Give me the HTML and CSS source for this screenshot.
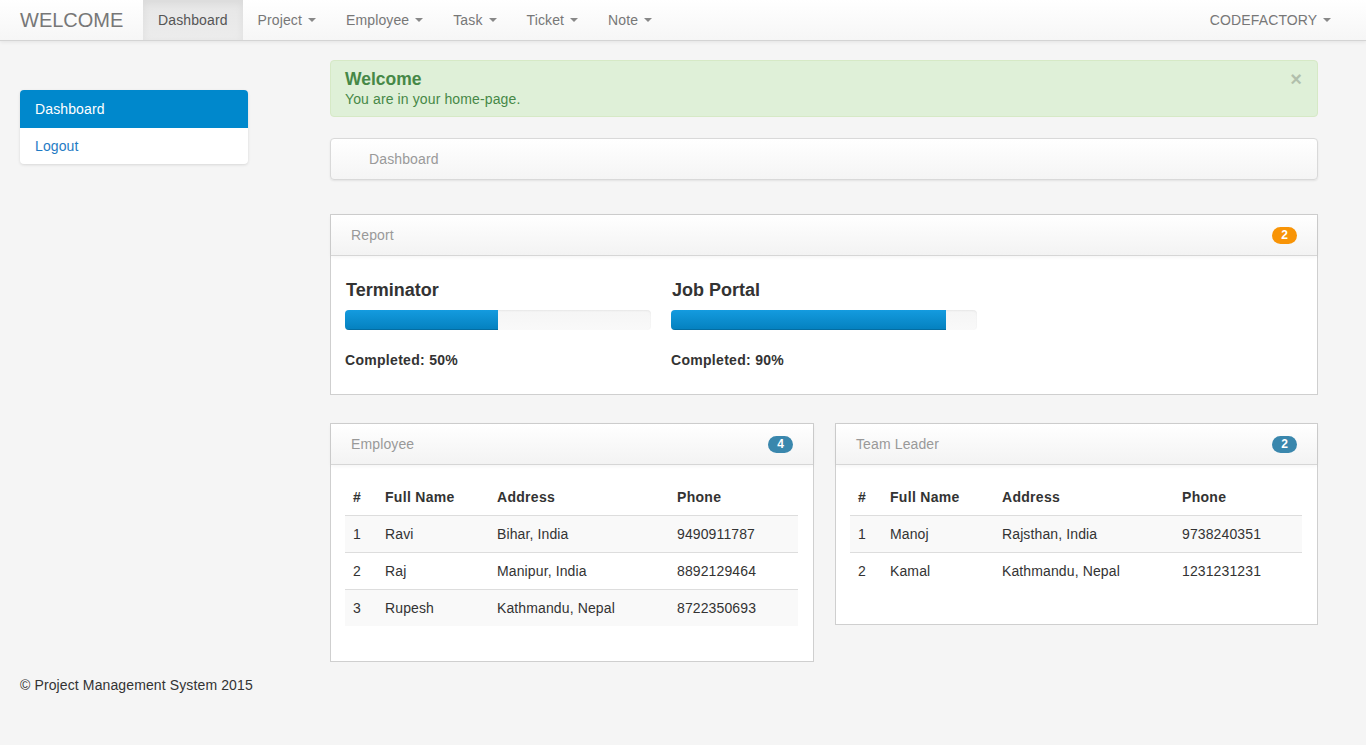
FILE: index.html
```html
<!DOCTYPE html>
<html>
<head>
<meta charset="utf-8">
<title>Dashboard</title>
<link rel="stylesheet" href="styles.css">
</head>
<body>
<nav class="navbar">
  <a class="brand">WELCOME</a>
  <ul class="nav">
    <li class="active"><a>Dashboard</a></li>
    <li><a>Project <b class="caret"></b></a></li>
    <li><a>Employee <b class="caret"></b></a></li>
    <li><a>Task <b class="caret"></b></a></li>
    <li><a>Ticket <b class="caret"></b></a></li>
    <li><a>Note <b class="caret"></b></a></li>
  </ul>
  <ul class="nav nav-right">
    <li><a>CODEFACTORY <b class="caret"></b></a></li>
  </ul>
</nav>

<div class="page">
  <aside class="sidebar">
    <div class="list-group">
      <a class="list-item active">Dashboard</a>
      <a class="list-item">Logout</a>
    </div>
  </aside>

  <main class="main">
    <div class="alert">
      <div class="alert-text">
        <h4>Welcome</h4>
        <div>You are in your home-page.</div>
      </div>
      <span class="close">&times;</span>
    </div>

    <div class="breadcrumb">Dashboard</div>

    <section class="panel report">
      <div class="panel-heading"><span>Report</span><span class="badge badge-warning">2</span></div>
      <div class="panel-body report-body">
        <div class="projects">
          <div class="project">
            <h4>Terminator</h4>
            <div class="progress"><div class="bar" style="width:50%"></div></div>
            <p>Completed: 50%</p>
          </div>
          <div class="project">
            <h4>Job Portal</h4>
            <div class="progress"><div class="bar" style="width:90%"></div></div>
            <p>Completed: 90%</p>
          </div>
        </div>
      </div>
    </section>

    <div class="panel-row">
      <section class="panel">
        <div class="panel-heading"><span>Employee</span><span class="badge badge-info">4</span></div>
        <div class="panel-body">
          <table class="table">
            <colgroup><col class="c1"><col class="c2"><col class="c3"><col class="c4"></colgroup>
            <thead><tr><th>#</th><th>Full Name</th><th>Address</th><th>Phone</th></tr></thead>
            <tbody>
              <tr><td>1</td><td>Ravi</td><td>Bihar, India</td><td>9490911787</td></tr>
              <tr><td>2</td><td>Raj</td><td>Manipur, India</td><td>8892129464</td></tr>
              <tr><td>3</td><td>Rupesh</td><td>Kathmandu, Nepal</td><td>8722350693</td></tr>
            </tbody>
          </table>
        </div>
      </section>
      <section class="panel">
        <div class="panel-heading"><span>Team Leader</span><span class="badge badge-info">2</span></div>
        <div class="panel-body">
          <table class="table">
            <colgroup><col class="c1"><col class="c2"><col class="c3"><col class="c4"></colgroup>
            <thead><tr><th>#</th><th>Full Name</th><th>Address</th><th>Phone</th></tr></thead>
            <tbody>
              <tr><td>1</td><td>Manoj</td><td>Rajsthan, India</td><td>9738240351</td></tr>
              <tr><td>2</td><td>Kamal</td><td>Kathmandu, Nepal</td><td>1231231231</td></tr>
            </tbody>
          </table>
        </div>
      </section>
    </div>
  </main>
</div>

<footer class="footer">&copy; Project Management System 2015</footer>
</body>
</html>
```

FILE: styles.css
```css
* { box-sizing: border-box; }
html, body { margin: 0; padding: 0; }
body {
  background: #f5f5f5;
  font-family: "Liberation Sans", Arial, Helvetica, sans-serif;
  font-size: 14px;
  line-height: 20px;
  color: #333;
  letter-spacing: 0.12px;
}
a { cursor: pointer; }

/* navbar */
.navbar {
  height: 41px;
  display: flex;
  align-items: stretch;
  padding: 0 20px;
  background: linear-gradient(to bottom, #ffffff 0%, #f6f6f6 100%);
  border-bottom: 1px solid #d4d4d4;
  box-shadow: 0 1px 4px rgba(0,0,0,0.08);
}
.brand {
  font-size: 20px;
  line-height: 40px;
  color: #777;
  width: 123px;
  letter-spacing: 0;
}
.nav {
  list-style: none;
  margin: 0;
  padding: 0;
  display: flex;
}
.nav li a {
  display: block;
  padding: 10px 15px;
  line-height: 20px;
  color: #777;
}
.nav li.active a {
  color: #555;
  background: linear-gradient(to bottom, #e6e6e6 0%, #ececec 100%);
  box-shadow: inset 0 3px 8px rgba(0,0,0,0.06);
}
.nav-right { margin-left: auto; }
.caret {
  display: inline-block;
  width: 0; height: 0;
  margin-left: 2px;
  vertical-align: middle;
  border-top: 4px solid #888;
  border-left: 4px solid transparent;
  border-right: 4px solid transparent;
  position: relative;
  top: -1px;
}

/* layout */
.page {
  display: flex;
  align-items: flex-start;
  padding: 19px 48px 0 20px;
}
.sidebar {
  width: 228px;
  margin-top: 30px;
  flex: none;
}
.main {
  width: 988px;
  margin-left: 82px;
  flex: none;
}

/* sidebar list */
.list-group {
  background: #fff;
  border-radius: 4px;
  box-shadow: 0 1px 3px rgba(0,0,0,0.12);
  overflow: hidden;
}
.list-item {
  display: block;
  padding: 9px 15px 9px 15px;
  color: #1f7bc4;
}
.list-item.active {
  background: #0088cc;
  color: #fff;
  padding: 9px 15px 9px 15px;
  height: 38px;
}
.list-item:not(.active) { height: 36px; padding-top: 8px; }

/* alert */
.alert {
  display: flex;
  justify-content: space-between;
  align-items: flex-start;
  background: #dff0d8;
  border: 1px solid #d6e9c6;
  border-radius: 4px;
  padding: 8px 14px 8px 14px;
  color: #468847;
  height: 57px;
}
.alert h4 {
  margin: 0;
  font-size: 17.5px;
  font-weight: bold;
  line-height: 20px;
  letter-spacing: 0;
}
.close {
  font-size: 20px;
  font-weight: bold;
  line-height: 20px;
  color: #000;
  opacity: 0.2;
  margin-top: 0;
  margin-right: 1px;
}

/* breadcrumb */
.breadcrumb {
  margin-top: 21px;
  height: 42px;
  padding: 10px 38px;
  background: linear-gradient(to bottom, #ffffff 0%, #f5f5f5 100%);
  border: 1px solid #d9d9d9;
  border-radius: 4px;
  box-shadow: 0 1px 2px rgba(0,0,0,0.08);
  color: #999;
}

/* panels */
.panel {
  background: #fff;
  border: 1px solid #cfcfcf;
}
.report { margin-top: 34px; }
.panel-heading {
  height: 41px;
  display: flex;
  justify-content: space-between;
  align-items: center;
  padding: 0 20px;
  color: #999;
  background: linear-gradient(to bottom, #ffffff 0%, #f3f3f3 100%);
  border-bottom: 1px solid #d6d6d6;
  box-shadow: 0 1px 4px rgba(0,0,0,0.05);
}
.badge {
  display: inline-block;
  min-width: 25px;
  height: 17px;
  padding: 0 8px;
  border-radius: 9px;
  color: #fff;
  font-size: 12px;
  font-weight: bold;
  line-height: 17px;
  text-align: center;
  letter-spacing: 0;
}
.badge-warning { background: #f89406; }
.badge-info { background: #3a87ad; }
.panel-body { padding: 15px 15px 15px 14px; }
.report-body { padding-bottom: 14px; }

/* report */
.projects {
  display: grid;
  grid-template-columns: 306px 306px;
  column-gap: 20px;
}
.project h4 {
  margin: 9px 0 10px 1px;
  font-size: 18px;
  line-height: 20px;
  font-weight: bold;
  color: #333;
  letter-spacing: 0;
}
.progress {
  height: 20px;
  border-radius: 4px;
  background: linear-gradient(to bottom, #f5f5f5 0%, #f9f9f9 100%);
  box-shadow: inset 0 1px 2px rgba(0,0,0,0.06);
  overflow: hidden;
  margin-bottom: 20px;
}
.bar {
  height: 100%;
  background: linear-gradient(to bottom, #149bdf 0%, #0480be 100%);
  box-shadow: inset 0 -1px 0 rgba(0,0,0,0.15);
}
.project p {
  margin: 0 0 10px 0;
  font-weight: bold;
  letter-spacing: 0.3px;
}

/* tables */
.panel-row {
  display: grid;
  grid-template-columns: 484px 483px;
  column-gap: 21px;
  align-items: start;
  margin-top: 28px;
}
.table {
  width: 100%;
  border-collapse: collapse;
  margin-bottom: 20px;
}
.c1 { width: 32px; }
.c2 { width: 112px; }
.c3 { width: 180px; }
.table th, .table td {
  text-align: left;
  padding: 8px 8px;
  line-height: 20px;
}
.table th {
  font-weight: bold;
  padding: 7px 8px 8px 8px;
  border-bottom: 1px solid #ddd;
  letter-spacing: 0.3px;
}
.table td { border-top: 1px solid #ddd; }
.table tbody tr:first-child td { border-top: none; }
.table tbody tr:nth-child(odd) td { background: #f9f9f9; }

/* footer */
.footer {
  padding: 13px 20px;
  color: #333;
}
```
